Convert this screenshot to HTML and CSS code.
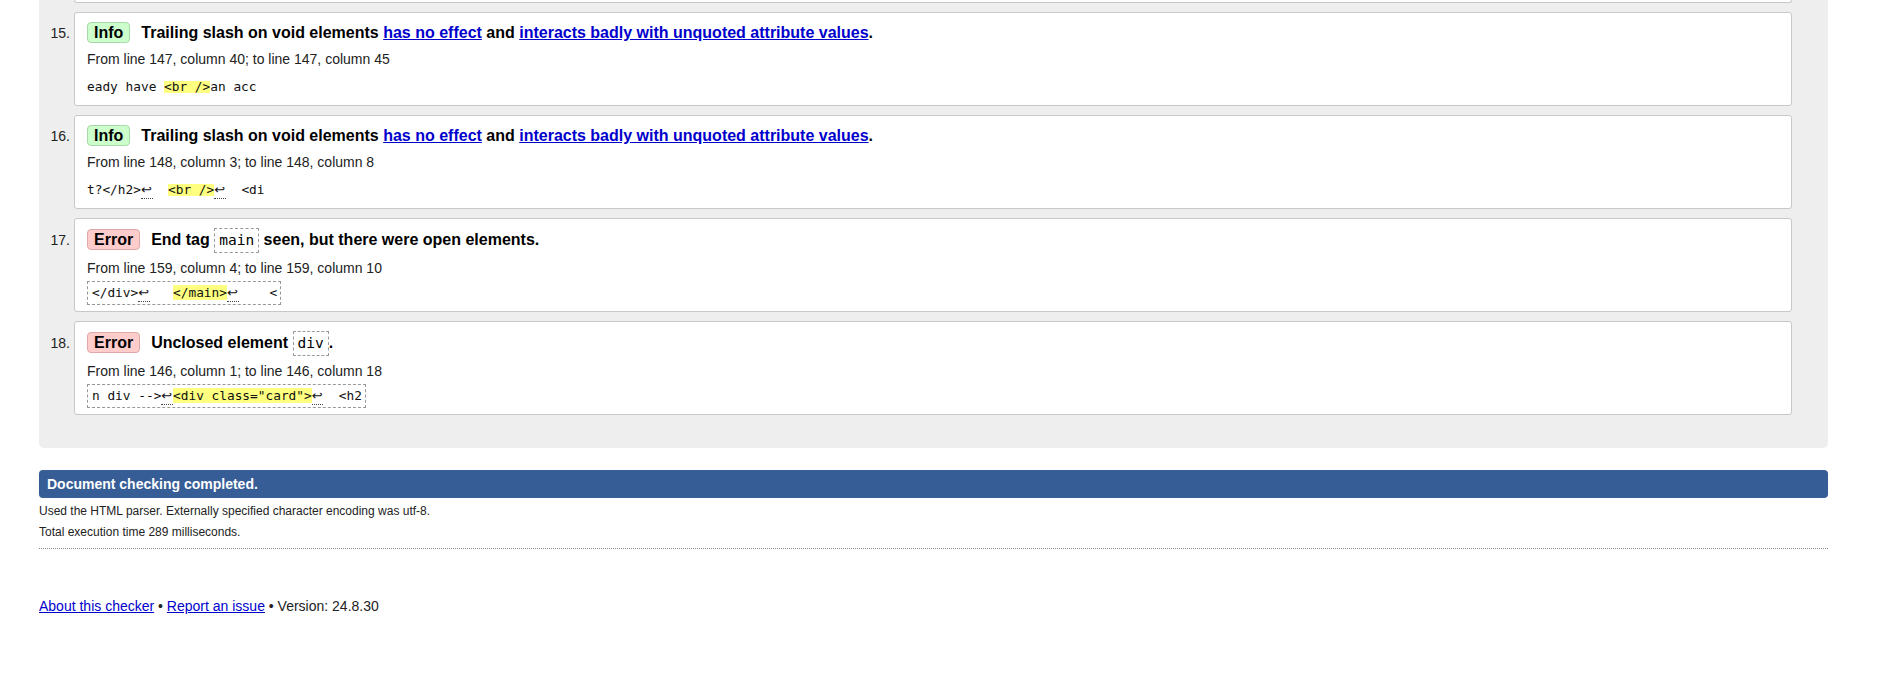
FILE: index.html
```html
<!DOCTYPE html>
<html lang="en">
<head>
<meta charset="utf-8">
<title>Nu Html Checker</title>
<link rel="stylesheet" href="styles.css">
</head>
<body>
<div class="page">
  <ol class="messages">
    <li class="item item-cut"><div class="card card-cut"></div></li>
    <li class="item">
      <span class="num">15.</span>
      <div class="card info">
        <p class="title"><strong class="badge">Info</strong>Trailing slash on void elements <a href="#">has no effect</a> and <a href="#">interacts badly with unquoted attribute values</a>.</p>
        <p class="loc">From line 147, column 40; to line 147, column 45</p>
        <p class="extract"><code>eady have <b class="hl">&lt;br /&gt;</b>an acc</code></p>
      </div>
    </li>
    <li class="item">
      <span class="num">16.</span>
      <div class="card info">
        <p class="title"><strong class="badge">Info</strong>Trailing slash on void elements <a href="#">has no effect</a> and <a href="#">interacts badly with unquoted attribute values</a>.</p>
        <p class="loc">From line 148, column 3; to line 148, column 8</p>
        <p class="extract"><code>t?&lt;/h2&gt;<span class="lf">↩</span>  <b class="hl">&lt;br /&gt;</b><span class="lf">↩</span>  &lt;di</code></p>
      </div>
    </li>
    <li class="item">
      <span class="num">17.</span>
      <div class="card error">
        <p class="title"><strong class="badge">Error</strong>End tag <code>main</code> seen, but there were open elements.</p>
        <p class="loc">From line 159, column 4; to line 159, column 10</p>
        <p class="extract"><code>&lt;/div&gt;<span class="lf">↩</span>   <b class="hl">&lt;/main&gt;</b><span class="lf">↩</span>    &lt;</code></p>
      </div>
    </li>
    <li class="item">
      <span class="num">18.</span>
      <div class="card error">
        <p class="title"><strong class="badge">Error</strong>Unclosed element <code>div</code>.</p>
        <p class="loc">From line 146, column 1; to line 146, column 18</p>
        <p class="extract"><code>n div --&gt;<span class="lf">↩</span><b class="hl">&lt;div class="card"&gt;</b><span class="lf">↩</span>  &lt;h2</code></p>
      </div>
    </li>
  </ol>

  <p class="status">Document checking completed.</p>
  <div class="details">
    <p>Used the HTML parser. Externally specified character encoding was utf-8.</p>
    <p class="second">Total execution time 289 milliseconds.</p>
  </div>

  <p class="footer"><a href="#">About this checker</a> • <a href="#">Report an issue</a> • Version: 24.8.30</p>
</div>
</body>
</html>
```

FILE: styles.css
```css
html {
  background: #fff;
}

body {
  margin: 0;
  font-family: "Liberation Sans", Arial, sans-serif;
  color: #000;
}

.page {
  width: 1789px;
  margin-left: 39px;
}

.messages {
  list-style: none;
  margin: 0;
  padding: 0 36px 33px 0;
  background: #eee;
  border-radius: 0 0 5px 5px;
  display: flex;
  flex-direction: column;
  gap: 9px;
}

.item {
  display: flex;
  align-items: baseline;
}

.num {
  flex: none;
  width: 35px;
  box-sizing: border-box;
  padding-right: 4px;
  text-align: right;
  font-size: 14px;
  color: #222;
}

.card {
  flex: 1;
  box-sizing: border-box;
  height: 94px;
  background: #fff;
  border: 1px solid #c8c8c8;
  border-radius: 3px;
  padding: 9px 12px 0;
}

.item-cut .card {
  height: 3px;
  padding: 0;
  margin-left: 35px;
  border-top: none;
  border-radius: 0 0 3px 3px;
}

.title {
  margin: 0;
  font-size: 16px;
  font-weight: bold;
  line-height: 22px;
}

.badge {
  display: inline-block;
  line-height: 19px;
  padding: 0 6px;
  border: 1px solid;
  border-radius: 4px;
  margin-right: 11px;
}

.info .badge {
  background: #ccffcc;
  border-color: #a8d8a8;
}

.error .badge {
  background: #ffcccc;
  border-color: #e0a8a8;
}

.title a,
.footer a {
  color: #0000cc;
}

.title code {
  display: inline-block;
  font-family: "DejaVu Sans Mono", monospace;
  font-weight: normal;
  font-size: 14.5px;
  line-height: 17px;
  padding: 3px 4px;
  border: 1px dashed #999;
}

.loc {
  margin: 6px 0 0;
  font-size: 14px;
  line-height: 18px;
  color: #222;
}

.extract {
  margin: 0;
  font-family: "DejaVu Sans Mono", monospace;
  font-size: 12.8px;
  line-height: 15px;
  white-space: pre;
  color: #111;
}

.extract code {
  font-family: inherit;
}

.info .extract {
  margin-top: 11px;
}

.error .extract {
  margin-top: 4px;
}

.error .extract code {
  display: inline-block;
  padding: 3px 3px 2px 4px;
  border: 1px dashed #999;
}

.hl {
  font-weight: normal;
  background: #ffff80;
}

.info .hl {
  display: inline-block;
  line-height: 12px;
}

.lf {
  display: inline-block;
  width: 11.7px;
  font-family: "DejaVu Sans", sans-serif;
  font-size: 13px;
  line-height: 15px;
  padding-bottom: 1px;
  border-bottom: 1px dotted #444;
  box-sizing: border-box;
  text-align: left;
}

.status {
  margin: 22px 0 0;
  background: #365d95;
  color: #fff;
  font-weight: bold;
  font-size: 14px;
  line-height: 28px;
  padding: 0 8px;
  border-radius: 4px;
}

.details {
  padding: 3px 0 6px;
  border-bottom: 1px dotted #888;
}

.details p {
  margin: 0;
  font-size: 12px;
  line-height: 20px;
  color: #222;
}

.details .second {
  margin-top: 1px;
}

.footer {
  margin: 47px 0 0;
  font-size: 14px;
  line-height: 20px;
  color: #222;
}
```
